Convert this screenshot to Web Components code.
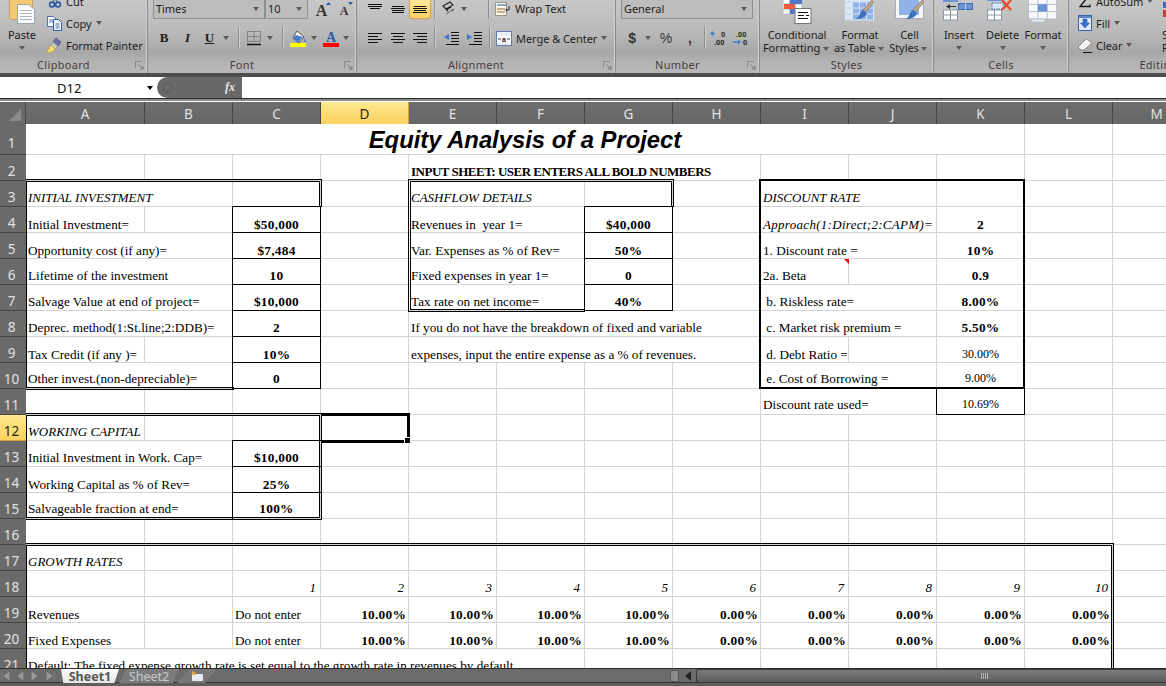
<!DOCTYPE html>
<html><head><meta charset="utf-8"><title>Equity Analysis</title>
<style>
html,body{margin:0;padding:0;overflow:hidden;background:#fff}
</style></head><body>
<x-app></x-app>
<script>
const grid3=(x,y,w,h,c,r,f='#fff',s='#9fb0c8')=>{let o=`<rect x="${x}" y="${y}" width="${w}" height="${h}" fill="${f}" stroke="${s}"/>`;for(let i=1;i<c;i++){const X=x+w*i/c;o+=`<path d="M${X} ${y}V${y+h}" stroke="${s}"/>`}for(let i=1;i<r;i++){const Y=y+h*i/r;o+=`<path d="M${x} ${Y}H${x+w}" stroke="${s}"/>`}return o};
const lines=(arr)=>arr.map(([x,y,w])=>`<path d="M${x} ${y+.5}h${w}" stroke="#111"/>`).join('');
const brush=(x,y)=>`<path d="M${x+15} ${y}l2 2-8 10-3-2z" fill="#b9a98a" stroke="#7a6a4f" stroke-width=".6"/><path d="M${x+5} ${y+10}l5 3c-1 4-6 6-11 6 3-2 4-6 6-9z" fill="#3f70c0"/>`;
const ICONS={
paste:[27,34,`<rect x=".5" y=".5" width="23" height="29" rx="2" fill="#f7c873" stroke="#c99c52"/><path d="M8.5 14.5h11l6 5v14h-17z" fill="#fbfcfe" stroke="#9aa7b8"/>`+[20,23,26,29].map(y=>`<path d="M11 ${y}.5h12" stroke="#a9b4c4"/>`).join('')],
cut:[16,14,`<circle cx="5" cy="10.5" r="2.4" fill="none" stroke="#2c5aa8" stroke-width="1.6"/><circle cx="11" cy="10.5" r="2.4" fill="none" stroke="#2c5aa8" stroke-width="1.6"/><path d="M6 8l3.5-8M10 8L6.5 0" stroke="#56647a" stroke-width="1.2"/>`],
copy:[16,16,`<path d="M.5 1.5h6l3 3v7h-9z" fill="#fff" stroke="#4a74b8"/><path d="M6.5 4.5h5l3 3v8h-8z" fill="#eef4fc" stroke="#2c5aa8"/><path d="M2 5h4M2 7h4M8.5 9h4M8.5 11h4M8.5 13h4" stroke="#4a74b8"/>`],
painter:[17,16,`<path d="M10 1l5 4-3 4-5-4z" fill="#6a70a8" stroke="#3c4070" stroke-width=".6"/><path d="M7 5l5 4-3 3-4-3z" fill="#c9c9c9" stroke="#777" stroke-width=".5"/><path d="M5 8l4 4c-2 3-6 4-9 3 3-1 3-5 5-7z" fill="#f6dc6a" stroke="#b59a30" stroke-width=".5"/>`],
borders:[16,16,`<path d="M1.5 1.5h13v10h-13zM8 1.5v10M1.5 6.5h13" fill="none" stroke="#555" stroke-dasharray="1 1"/><path d="M1 14.5h14" stroke="#111" stroke-width="1.5"/>`],
fill:[17,17,`<path d="M7 1l7 6-5 6-6-5z" fill="#fff" stroke="#333" stroke-width=".8"/><path d="M6 5l7 2-5 6-5-5z" fill="#4d7cc8"/><path d="M14.5 8c1 2 2 3 1 4s-2 0-1-4z" fill="#4d7cc8"/><rect y="13" width="16" height="4" fill="#ffff00"/>`],
color:[17,17,`<text x="8" y="12" text-anchor="middle" font-family="Liberation Serif" font-weight="700" font-size="14" fill="#2c5aa8">A</text><rect y="13" width="16" height="4" fill="#ff0000"/>`],
growA:[16,16,`<text x="6.5" y="15" text-anchor="middle" font-family="Liberation Serif" font-weight="700" font-size="16" fill="#333">A</text><path d="M11 4l2.5-3 2.5 3z" fill="#2c5aa8"/>`],
shrinkA:[16,16,`<text x="6" y="14" text-anchor="middle" font-family="Liberation Serif" font-weight="700" font-size="12" fill="#333">A</text><path d="M10 1l2.5 3 2.5-3z" fill="#2c5aa8"/>`],
vtop:[14,10,lines([[0,1,14],[0,3,14],[2,5,10]])],
vmid:[14,10,lines([[1,2,12],[0,4,14],[1,6,12],[1,8,12]])],
vbot:[14,10,lines([[1,3,12],[0,5,14],[1,7,12],[0,9,14]])],
left:[14,13,lines([[0,1,14],[0,4,10],[0,7,14],[0,10,10]])],
center:[14,13,lines([[0,1,14],[2,4,10],[0,7,14],[2,10,10]])],
right:[14,13,lines([[0,1,14],[4,4,10],[0,7,14],[4,10,10]])],
orient:[14,16,`<path d="M1 5l7-4 3 3-7 4zM4 9l5-3M2 6l4 4" fill="none" stroke="#222" stroke-width="1.1"/><path d="M4 13l8-5" stroke="#666"/><path d="M12 8l-3 .2 1.6 2.5z" fill="#666"/>`],
indL:[15,14,lines([[7,1,8],[7,4,8],[7,7,8],[7,10,8],[2,13,13]])+`<path d="M0 6l5-3v6z" fill="#3f78d0"/>`],
indR:[15,14,lines([[7,1,8],[7,4,8],[7,7,8],[7,10,8],[2,13,13]])+`<path d="M5 6L0 3v6z" fill="#3f78d0"/>`],
wrap:[17,16,`<rect x=".5" y="1.5" width="11" height="13" fill="#fbf6ea" stroke="#998"/><path d="M2 4h10" stroke="#2c5aa8"/><path d="M2 8h8M2 11h8" stroke="#a06030"/><path d="M14 5v4h-3" fill="none" stroke="#333"/><path d="M10 9l2-1.5v3z" fill="#333"/>`],
merge:[16,15,`<rect x=".5" y=".5" width="15" height="14" fill="#e9eef7" stroke="#5b7db0"/><rect x="1" y="5" width="14" height="6" fill="#fff"/><text x="8" y="10.500" text-anchor="middle" font-family="Liberation Sans" font-size="7" font-weight="700" fill="#222">a</text><path d="M2 8h3M11 8h3" stroke="#333"/>`],
inc:[18,16,`<path d="M1 3.500h4" stroke="#3f78d0" stroke-width="1.4"/><path d="M0 3.500l3-2.500v5z" fill="#3f78d0"/><text x="11" y="7" font-family="Liberation Sans" font-weight="700" font-size="7.500" fill="#222">0</text><text x="4" y="15" font-family="Liberation Sans" font-weight="700" font-size="7.500" fill="#222">.00</text>`],
dec:[18,16,`<text x="4" y="7" font-family="Liberation Sans" font-weight="700" font-size="7.500" fill="#222">.00</text><path d="M1 12h6" stroke="#3f78d0" stroke-width="1.4"/><path d="M9 12l-3-2.500v5z" fill="#3f78d0"/><text x="11" y="15" font-family="Liberation Sans" font-weight="700" font-size="7.500" fill="#222">0</text>`],
cond:[30,30,grid3(1,0,19,20,3,4,'#fff','#b7c0cc')+`<rect x="8" y="5" width="12" height="5" fill="#4d79c7"/><rect x="2" y="10" width="11" height="5" fill="#ef5b3d"/><rect x="8" y="15" width="6" height="5" fill="#4d79c7"/><rect x="13" y="14.500" width="16" height="15" fill="#fff" stroke="#777"/><path d="M16 18.500h10M16 21.500h6M24 21.500h3M16 24.500h10" stroke="#111"/>`],
table:[30,30,grid3(.5,2,28,24,4,4,'#dbe6f6','#a8bcdc')+`<rect x="7.500" y="8" width="21" height="18" fill="#8fb2e8"/>`+grid3(.5,2,28,24,4,4,'none','#dbe6f6')+brush(12,6)],
cstyle:[30,30,`<rect x=".5" y=".5" width="28" height="24" fill="#f4f7fc" stroke="#aab"/><rect x="4" y="4" width="20" height="17" fill="#8fb2e8"/>`+brush(12,6)],
insert:[32,30,grid3(.5,16,14,10,2,2,'#fff','#8a96a6')+`<rect x="15.500" y="9.500" width="14" height="6" fill="#6c94d4" stroke="#3e6cb4"/><path d="M22.500 9v7" stroke="#bcd"/><rect x="0" y="0" width="15" height="8" fill="#6c94d4"/><path d="M5 12.500h8" stroke="#333"/><path d="M3 12.500l4-2.500v5z" fill="#333"/>`],
del:[32,30,grid3(.5,16,14,10,2,2,'#fff','#8a96a6')+`<rect x="5" y="9" width="11" height="6" fill="#dbe6f6" stroke="#4a74b8" stroke-dasharray="1.500 1"/><rect x="0" y="0" width="16" height="7" fill="#6c94d4"/><path d="M15 6l9 10M24 6l-9 10" stroke="#e84a2a" stroke-width="2.200"/>`],
fmt:[30,30,grid3(.5,3,28,22,3,3,'#f6f8fc','#b7c0cc')+`<rect x="9.800" y="10.300" width="9.300" height="7.300" fill="#6c94d4"/><rect x="3" y="25" width="14" height="3" rx="1.500" fill="#e6eaf0" stroke="#b7c0cc"/>`],
sigma:[14,14,`<path d="M1.500 1.500h10v2M2 1.500l5 5-5 6h10v-2" fill="none" stroke="#111" stroke-width="1.300"/>`],
fillD:[14,16,`<rect x=".5" y=".5" width="13" height="15" fill="#dfe9f8" stroke="#3b66aa"/><rect x="1" y="1" width="12" height="2" fill="#5b86c8"/><path d="M5 4h4v4h2.500L7 13 2.500 8H5z" fill="#3a74d0" stroke="#234c94" stroke-width=".5"/>`],
eraser:[16,15,`<path d="M1 9l7-7a2 2 0 0 1 3 0l3 2a2 2 0 0 1 0 2l-7 6H4z" fill="#f4f4f4" stroke="#888"/><path d="M6 14.500h9" stroke="#111"/>`],
sort:[12,24,`<rect x="1" y="2" width="4" height="6" fill="#3a6cc0"/><rect x="1" y="10" width="4" height="7" fill="#c8402a"/>`],
launcher:[9,9,`<path d="M.5 7V.5H7" fill="none" stroke="#8a8a8a"/><path d="M3.500 3.500L8 8M8 5v3H5" fill="none" stroke="#777"/>`],
};
const svgFor=n=>{const [w,h,b]=ICONS[n];return `<svg xmlns="http://www.w3.org/2000/svg" width="${w}" height="${h}" viewBox="0 0 ${w} ${h}" style="display:block;flex:none;overflow:visible">${b}</svg>`};

class Base extends HTMLElement{
  constructor(){super();this.attachShadow({mode:'open'})}
}
class XIc extends Base{connectedCallback(){
  const n=this.getAttribute('n'),w=this.getAttribute('w')||'22',ml=this.getAttribute('ml')||0;
  this.shadowRoot.innerHTML=`<style>:host{display:flex;align-items:center;justify-content:center;flex:none;width:${w}px;margin-left:${ml}px;height:100%}</style>${n?svgFor(n):''}<slot></slot>`;
}}
class XCaret extends Base{connectedCallback(){
  const w=this.getAttribute('w')||'12';
  this.shadowRoot.innerHTML=`<style>:host{display:inline-flex;align-items:center;justify-content:center;flex:none;width:${w}px;height:100%;vertical-align:middle}i{display:block;width:0;height:0;border:3.5px solid transparent;border-top:4px solid #5a5a5a;border-bottom:0}</style><i></i>`;
}}
class XSep extends Base{connectedCallback(){
  const w=this.getAttribute('w')||'6';
  this.shadowRoot.innerHTML=`<style>:host{display:flex;justify-content:center;flex:none;width:${w}px;height:100%;align-items:center}i{display:block;width:1px;height:${this.getAttribute('h')||22}px;background:#8e8e8e;box-shadow:1px 0 0 #d0d0d0}</style><i></i>`;
}}
class XCombo extends Base{connectedCallback(){
  const w=this.getAttribute('w');
  this.shadowRoot.innerHTML=`<style>:host{display:flex;flex:none;width:${w}px;height:22px;box-sizing:border-box;border:1px solid #8f8f8f;border-top:0;background:#bdbdbd;align-items:center;padding-left:2px;color:#1e1e1e;font-size:11px;justify-content:space-between;padding-top:2px}</style><span><slot></slot></span><x-caret w="17"></x-caret>`;
}}
class XSmall extends Base{connectedCallback(){
  const n=this.getAttribute('n'),iw=this.getAttribute('iw')||'21',c=this.hasAttribute('caret');
  this.shadowRoot.innerHTML=`<style>:host{display:flex;height:22px;align-items:center;white-space:nowrap;flex:none}span{margin-left:1px}</style><x-ic n="${n}" w="${iw}"></x-ic><span><slot></slot></span>${c?'<x-caret w="14"></x-caret>':''}`;
}}
class XBig extends Base{connectedCallback(){
  const n=this.getAttribute('n'),w=this.getAttribute('w');
  this.shadowRoot.innerHTML=`<style>:host{display:flex;flex-direction:column;align-items:center;flex:none;width:${w}px;height:70px;white-space:nowrap;line-height:13px;text-align:center}
  .i{height:37px;display:flex;align-items:flex-end;margin-bottom:4px;flex:none}</style>
  <div class="i">${n?svgFor(n):''}</div><slot></slot>`;
}}
class XGroup extends Base{connectedCallback(){
  const w=this.getAttribute('w'),l=this.getAttribute('label'),lc=this.hasAttribute('launcher');
  this.shadowRoot.innerHTML=`<style>:host{display:flex;flex-direction:column;flex:none;box-sizing:border-box;width:${w}px;height:86px;border-right:1px solid #8a8a8a;box-shadow:inset -1px 0 0 #cfcfcf;position:relative}
  .b{height:70px;flex:none;display:flex;flex-direction:column}
  .l{height:16px;line-height:15px;text-align:center;color:#4a3c3c;font-size:11px;letter-spacing:.3px;position:relative;white-space:nowrap;padding-right:${lc?20:0}px}
  .k{position:absolute;right:3px;top:4px}</style>
  <div class="b"><slot></slot></div><div class="l">${l}${lc?`<span class="k">${svgFor('launcher')}</span>`:''}</div>`;
}}
class XRibbon extends Base{connectedCallback(){
  this.shadowRoot.innerHTML=`<style>
  :host{display:block;height:73px;overflow:hidden;flex:none;background:linear-gradient(#c8c8c8 0,#b9b9b9 45%,#a7a7a7 72%,#b3b3b3 85%,#b8b8b8 100%);font:11px "Noto Sans",sans-serif;color:#1c1c1c;letter-spacing:-.05px}
  .w{display:flex;margin-top:-13px;width:1400px}
  .r{display:flex;align-items:stretch}
  .col{display:flex;flex-direction:column}
  .sel{display:flex;align-items:center;justify-content:center;flex:none;width:22px;height:21px;box-sizing:border-box;margin:11px 0 0 0;background:linear-gradient(#ffe9a3,#fdd25f);border:1px solid #d2a24a;border-top:0;border-radius:0 0 3px 3px}
  .t{display:flex;align-items:center;white-space:nowrap}
  b.f{font:700 13px "Liberation Serif",serif}
  i.f{font:700 italic 13px "Liberation Serif",serif}
  u.f{font:700 13px "Liberation Serif",serif}
  .nf{font:700 14px "Liberation Sans",sans-serif;color:#333}
  </style>
  <div class="w">
   <x-group w="148" label="Clipboard" launcher>
    <div class="r" style="height:70px">
      <x-big w="44" n="paste">Paste<x-caret style="height:13px"></x-caret></x-big>
      <div class="col" style="padding-top:3px">
        <x-small n="cut">Cut</x-small>
        <x-small n="copy" caret>Copy</x-small>
        <x-small n="painter">Format Painter</x-small>
      </div>
    </div>
   </x-group>
   <x-group w="209" label="Font" launcher>
    <div class="r" style="height:32px;padding:0 0 0 5px;align-items:flex-end">
      <x-combo w="112" style="font-size:11px">Times</x-combo><x-combo w="43">10</x-combo>
      <x-ic n="growA" w="25" ml="2" style="height:20px"></x-ic><x-ic n="shrinkA" w="22" style="height:20px"></x-ic>
    </div>
    <div class="r" style="height:38px;padding-left:4px">
      <x-ic w="24"><b class="f">B</b></x-ic><x-ic w="23"><i class="f">I</i></x-ic><x-ic w="21"><u class="f">U</u></x-ic><x-caret></x-caret><x-sep w="12"></x-sep>
      <x-ic n="borders" w="20"></x-ic><x-caret></x-caret><x-sep w="12"></x-sep>
      <x-ic n="fill" w="20"></x-ic><x-caret></x-caret><x-ic n="color" w="22"></x-ic><x-caret w="8"></x-caret>
    </div>
   </x-group>
   <x-group w="259" label="Alignment" launcher>
    <div class="r" style="height:32px;padding-left:6px">
      <x-ic n="vtop" w="23" style="padding-top:9px;box-sizing:border-box"></x-ic><x-ic n="vmid" w="23" style="padding-top:11px;box-sizing:border-box"></x-ic>
      <div class="sel">${svgFor('vbot')}</div>
      <x-sep w="7" h="20" style="padding-top:11px;box-sizing:border-box"></x-sep>
      <x-ic n="orient" w="22" style="padding-top:11px;box-sizing:border-box"></x-ic><x-caret w="8" style="padding-top:11px;box-sizing:border-box"></x-caret>
      <x-sep w="6" h="20" style="margin-left:17px;padding-top:11px;box-sizing:border-box"></x-sep>
      <div class="t" style="padding-top:11px"><x-ic n="wrap" w="24" style="height:auto"></x-ic>Wrap Text</div>
    </div>
    <div class="r" style="height:38px;padding-left:6px">
      <x-ic n="left" w="23"></x-ic><x-ic n="center" w="23"></x-ic><x-ic n="right" w="22"></x-ic>
      <x-sep w="7"></x-sep>
      <x-ic n="indL" w="23" ml="2"></x-ic><x-ic n="indR" w="23"></x-ic>
      <x-sep w="6"></x-sep>
      <div class="t"><x-ic n="merge" w="24" style="height:auto"></x-ic>Merge &amp; Center<x-caret w="14" style="height:auto"></x-caret></div>
    </div>
   </x-group>
   <x-group w="144" label="Number" launcher>
    <div class="r" style="height:32px;padding-left:5px;align-items:flex-end"><x-combo w="132">General</x-combo></div>
    <div class="r" style="height:38px;padding-left:6px">
      <x-ic w="20"><span class="nf">$</span></x-ic><x-caret></x-caret><x-ic w="22" ml="1"><span class="nf" style="font-weight:400">%</span></x-ic><x-ic w="22" ml="2"><span class="nf">,</span></x-ic><x-sep w="6"></x-sep>
      <x-ic n="inc" w="22" ml="1"></x-ic><x-ic n="dec" w="22"></x-ic>
    </div>
   </x-group>
   <x-group w="174" label="Styles">
    <div class="r">
      <x-big w="74" n="cond">Conditional<span>Formatting<x-caret w="11" style="height:13px"></x-caret></span></x-big>
      <x-big w="52" n="table">Format<span>as Table<x-caret w="11" style="height:13px"></x-caret></span></x-big>
      <x-big w="47" n="cstyle">Cell<span>Styles<x-caret w="11" style="height:13px"></x-caret></span></x-big>
    </div>
   </x-group>
   <x-group w="135" label="Cells">
    <div class="r">
      <x-big w="50" n="insert">Insert<x-caret style="height:13px"></x-caret></x-big>
      <x-big w="37" n="del">Delete<x-caret style="height:13px"></x-caret></x-big>
      <x-big w="44" n="fmt">Format<x-caret style="height:13px"></x-caret></x-big>
    </div>
   </x-group>
   <x-group w="180" label="Editing">
    <div class="r" style="height:70px;padding-left:6px">
      <div class="col" style="padding-top:3px;width:87px;flex:none">
        <x-small n="sigma" caret iw="20">AutoSum</x-small>
        <x-small n="fillD" caret iw="20">Fill</x-small>
        <x-small n="eraser" caret iw="20">Clear</x-small>
      </div>
      <x-big w="36" n="sort" style="align-items:flex-start">Sort &amp;<span>Filter</span></x-big>
    </div>
   </x-group>
  </div>`;
}}
class XFormula extends Base{connectedCallback(){
  this.shadowRoot.innerHTML=`<style>
  :host{display:flex;flex:none;height:29px;box-sizing:border-box;background:#fff;border-top:4px solid;border-color:#4d4d4d;flex-direction:column}
  .m{display:flex;height:21px;flex:none;font:13px "Noto Sans",sans-serif;color:#111;align-items:stretch}
  .n{width:157px;display:flex;align-items:center;flex:none;position:relative;padding-left:57px;box-sizing:border-box}
  .a{position:absolute;right:4px;top:9px;width:0;height:0;border:3.5px solid transparent;border-top:4px solid #000;border-bottom:0}
  .p{width:85px;flex:none;background:#686868;border-radius:11px 0 0 11px;display:flex;align-items:center;justify-content:space-between;padding:0 7px 0 6px;box-sizing:border-box}
  .d{width:9px;height:9px;border-radius:50%;background:radial-gradient(#6e6e6e,#5c5c5c);box-shadow:0 0 0 1px #606060}
  .f{font:italic 700 12px "Liberation Serif",serif;color:#e4e4e4}
  .bar{height:3px;flex:none;background:linear-gradient(#2a2a2a 0,#2a2a2a 33%,#8b8b8b 34%,#8b8b8b 100%)}
  .s{flex:1}
  </style><div class="m"><div class="n">D12<span class="a"></span></div><div class="p"><span class="d"></span><span class="f">fx</span></div><div class="s"></div></div><div class="bar"></div><slot></slot>`;
}}
const COLS='ABCDEFGHIJKLM'.split('');
class XSheet extends Base{connectedCallback(){
  const c={};
  const set=(k,t,o={})=>c[k]=Object.assign({t},o);
  set('A1','Equity Analysis of a Project',{span:11,cls:'title'});
  set('E2','INPUT SHEET: USER ENTERS ALL BOLD NUMBERS',{span:4,cls:'b hd2'});
  const A=[[3,'INITIAL INVESTMENT',2,'i'],[4,'Initial Investment=',1],[5,'Opportunity cost (if any)=',2],[6,'Lifetime of the investment',2],[7,'Salvage Value at end of project=',2],[8,'Deprec. method(1:St.line;2:DDB)=',2],[9,'Tax Credit (if any )=',1],[10,'Other invest.(non-depreciable)=',2],[12,'WORKING CAPITAL',1,'i'],[13,'Initial Investment in Work. Cap=',2],[14,'Working Capital as % of Rev=',2],[15,'Salvageable fraction at end=',2],[17,'GROWTH RATES',1,'i'],[19,'Revenues',1],[20,'Fixed Expenses',1],[21,'Default: The fixed expense growth rate is set equal to the growth rate in revenues by default.',6]];
  A.forEach(([r,t,s,k])=>set('A'+r,t,{span:s,cls:k||''}));
  [[4,'$50,000'],[5,'$7,484'],[6,'10'],[7,'$10,000'],[8,'2'],[9,'10%'],[10,'0'],[13,'$10,000'],[14,'25%'],[15,'100%']].forEach(([r,t])=>set('C'+r,t,{cls:'b m'}));
  [[3,'CASHFLOW DETAILS','i'],[4,'Revenues in  year 1='],[5,'Var. Expenses as % of Rev='],[6,'Fixed expenses in year 1='],[7,'Tax rate on net income=']].forEach(([r,t,k])=>set('E'+r,t,{span:2,cls:k||''}));
  [[4,'$40,000'],[5,'50%'],[6,'0'],[7,'40%']].forEach(([r,t])=>set('G'+r,t,{cls:'b m'}));
  set('E8','If you do not have the breakdown of fixed and variable',{span:4});
  set('E9','expenses, input the entire expense as a % of revenues.',{span:4});
  [[3,'DISCOUNT RATE',2,'i'],[4,'Approach(1:Direct;2:CAPM)=',2,'i ap'],[5,'1. Discount rate =',2],[6,'2a. Beta',1],[7,' b. Riskless rate=',2],[8,' c. Market risk premium =',2],[9,' d. Debt Ratio =',1],[10,' e. Cost of Borrowing =',2],[11,'Discount rate used=',2]].forEach(([r,t,s,k])=>set('I'+r,t,{span:s,cls:k||''}));
  [[4,'2'],[5,'10%'],[6,'0.9'],[7,'8.00%'],[8,'5.50%']].forEach(([r,t])=>set('K'+r,t,{cls:'b m'}));
  [[9,'30.00%'],[10,'9.00%'],[11,'10.69%']].forEach(([r,t])=>set('K'+r,t,{cls:'m sm'}));
  'CDEFGHIJKL'.split('').forEach((k,i)=>set(k+'18',String(i+1),{cls:'rt i n'}));
  [19,20].forEach(r=>{set('C'+r,'Do not enter');'DEFG'.split('').forEach(k=>set(k+r,'10.00%',{cls:'b rt'}));'HIJKL'.split('').forEach(k=>set(k+r,'0.00%',{cls:'b rt'}))});
  const low=[4,5,9,14,19,20],high=[10,11,15];

  let h='';
  h+=`<div class="hd corner"><i></i></div>`;
  COLS.forEach((k,i)=>h+=`<div class="hd col${k==='D'?' on':''}" style="grid-area:1/${i+2}">${k}</div>`);
  for(let r=1;r<=22;r++){
    h+=`<div class="hd row${r===12?' on':''}" style="grid-area:${r+1}/1">${r}</div>`;
    let skip=0;
    const adj=low.includes(r)?' lo':high.includes(r)?' hi':'';
    COLS.forEach((k,i)=>{
      if(skip>0){skip--;return}
      const d=c[k+r];
      const span=d&&d.span||1;skip=span-1;
      const esc=(d?d.t:'').replace(/&/g,'&amp;');
      h+=`<div class="c${adj} ${d&&d.cls||''}" style="grid-area:${r+1}/${i+2}/auto/span ${span}">${esc}</div>`;
    });
  }
  const ci=k=>COLS.indexOf(k)+2;
  const fr=(c1,r1,c2,r2,st)=>{h+=`<div class="f" style="grid-area:${r1+1}/${ci(c1)}/${r2+2}/${ci(c2)+1};${st}"></div>`};
  const D='3px double #000',T='1px solid #000';
  fr('A',3,'C',3,`border-top:${D};border-right:${D};border-left:${D};margin:-2px -1px 0 -2px`);
  fr('A',4,'B',10,`border-left:${D};border-bottom:${D};margin:0 -1px -1px -2px`);
  ['4','5','6','7','8','9','10'].forEach(r=>fr('C',+r,'C',+r,`border:${T};margin:-1px 0 0 -1px`));
  fr('A',12,'C',15,`border:${D};margin:-2px -1px -1px -2px`);
  [13,14,15].forEach(r=>fr('C',r,'C',r,`border-top:${T};border-left:${T};margin:-1px 0 0 -1px`));
  fr('E',3,'G',3,`border-top:${D};border-right:${D};border-left:${D};margin:-2px -1px 0 -1px`);
  fr('E',4,'F',7,`border-left:${D};border-bottom:${D};margin:0 0 -1px -1px`);
  [4,5,6,7].forEach(r=>fr('G',r,'G',r,`border:${T};margin:-1px 0 0 -1px`));
  fr('I',3,'K',10,`border:2px solid #000;margin:-2px 0 0 -2px`);
  fr('K',11,'K',11,`border:${T};border-top:0;margin:0 0 0 -1px`);
  fr('A',17,'L',22,`border:${D};margin:-2px -1px 0 -2px`);
  h+=`<div class="f sel" style="grid-area:13/${ci('D')}"><i class="hdl"></i></div>`;
  h+=`<div class="f" style="grid-area:7/${ci('I')};border:0"><i class="cm"></i></div>`;
  this.shadowRoot.innerHTML=`<style>
  :host{display:block;flex:1;min-height:0;overflow:hidden;background:#fff;font:13.2px/15px "Liberation Serif",serif;color:#000}
  .g{display:grid;grid-template-columns:26px 119px repeat(12,88px);grid-template-rows:22px 31px repeat(22,26px);width:1200px}
  .c{box-sizing:border-box;border-right:1px solid #d4d4d4;border-bottom:1px solid #d4d4d4;display:flex;align-items:flex-end;padding:0 2px 1px;white-space:pre;min-width:0;min-height:0;overflow:visible}
  .c.lo{padding-bottom:0}.c.hi{padding-bottom:2px}
  .c.i{font-style:italic;font-size:13px}.c.b{font-weight:700;font-size:13.33px;letter-spacing:.25px}
  .c.ap{letter-spacing:.3px}
  .c.hd2{font-size:13px;letter-spacing:-.5px}
  .c.m{justify-content:center}.c.rt{justify-content:flex-end;padding-right:2px}
  .c.n{padding-right:4px}
  .c.sm{font-size:12px}
  .c.title{justify-content:center;align-items:center;font:italic 700 23.8px/28px "Liberation Sans",sans-serif;padding:2px 0 0}
  .hd{box-sizing:border-box;background:#6a6a6a;color:#e2e2e2;font:13.5px "Noto Sans",sans-serif;display:flex;align-items:center;justify-content:center;z-index:3}
  .hd.col{border-right:1px solid #454545;background:linear-gradient(#6e6e6e,#666);padding-top:1px}
  .hd.row{border-bottom:1px solid #454545;padding:7px 3px 0 0;width:26px}
  .hd.on{background:linear-gradient(#ffe88f,#fdd25f);color:#1c2a12;border-color:#d69f3a}
  .corner{grid-area:1/1;position:relative;border-right:1px solid #454545}
  .corner i{position:absolute;right:4px;bottom:3px;width:0;height:0;border-style:solid;border-width:0 0 12px 12px;border-color:transparent transparent #8a8a8a transparent}
  .f{box-sizing:border-box;pointer-events:none;z-index:2;min-width:0;min-height:0;position:relative}
  .sel{border:3px solid #000;border-left:0;margin:-2px -1px -2px 1px}
  .hdl{position:absolute;right:-4px;bottom:-4px;width:5px;height:5px;background:#000;border:1px solid #fff}
  .cm{position:absolute;right:0;top:0;width:0;height:0;border-style:solid;border-width:0 5px 5px 0;border-color:transparent #f00 transparent transparent}
  </style><div class="g">${h}</div>`;
}}
class XTabs extends Base{connectedCallback(){
  const nav=['M2 3v8M9 3l-5 4 5 4z','M8 3l-5 4 5 4z','M2 3l5 4-5 4z','M2 3l5 4-5 4zM9 3v8'];
  this.shadowRoot.innerHTML=`<style>
  :host{display:flex;flex:none;height:18px;box-sizing:border-box;background:#6b6b6b;border-top:1px solid #2c2c2c;padding-bottom:3px;box-shadow:inset 0 -3px 0 #5e5e5e,inset 0 -4px 0 #333;font:700 12.5px "Noto Sans",sans-serif;align-items:stretch}
  .nav{display:flex;width:61px;flex:none;box-sizing:border-box;align-items:center;gap:1px}
  .nav svg{flex:none;display:block}
  .t1{width:58px;flex:none;background:linear-gradient(#fff,#e4e4e4);color:#555;display:flex;align-items:center;justify-content:center;clip-path:polygon(0 0,100% 0,92% 100%,4% 100%)}
  .t2{width:60px;flex:none;background:#7b7b7b;color:#c9c9c9;font-weight:400;display:flex;align-items:center;justify-content:center;clip-path:polygon(12% 0,100% 0,90% 100%,0 100%)}
  .t3{width:40px;margin-left:-2px;flex:none;background:#777;clip-path:polygon(30% 0,100% 0,70% 100%,0 100%);display:flex;align-items:center;justify-content:center}
  .sp{width:453px;flex:none}
  .split{width:9px;flex:none;background:#8c8c8c;border:1px solid #555;box-sizing:border-box;margin:1px 0}
  .la{width:17px;flex:none;display:flex;align-items:center;justify-content:center}
  .th{flex:1;border-radius:3px 0 0 3px;background:linear-gradient(#7c7c7c,#5c5c5c);border:1px solid #3a3a3a;border-right:0;display:flex;align-items:center;justify-content:center;box-sizing:border-box;padding-left:106px}
  .gr{width:7px;height:6px;background:repeating-linear-gradient(90deg,#b0b0b0 0,#b0b0b0 1px,transparent 1px,transparent 2px)}
  </style>
  <div class="nav">${nav.map(d=>`<svg width="14" height="14" viewBox="0 0 14 14"><path d="${d}" fill="#9a9a9a" stroke="#9a9a9a" stroke-width=".6"/></svg>`).join('')}</div>
  <div class="t1">Sheet1</div><div class="t2">Sheet2</div>
  <div class="t3"><svg width="14" height="11" viewBox="0 0 14 11"><rect x="2" y="3" width="11" height="7" rx="1" fill="#e6ecf4"/><path d="M3 0l1 1.500 1.500-.5-.5 1.500 1.500 1-2 .3L4 5 3 3.500 1 3.300l1.500-1L2 .8z" fill="#f2a93a"/></svg></div>
  <div class="sp"></div><div class="split"></div>
  <div class="la"><svg width="8" height="10" viewBox="0 0 8 10"><path d="M7 0L1 5l6 5z" fill="#222"/></svg></div>
  <div class="th"><div class="gr"></div></div>`;
}}
class XApp extends Base{connectedCallback(){
  this.shadowRoot.innerHTML=`<style>:host{display:flex;flex-direction:column;width:1166px;height:686px;overflow:hidden}</style>
  <x-ribbon></x-ribbon><x-formula></x-formula><x-sheet></x-sheet><x-tabs></x-tabs>`;
}}
[['x-ic',XIc],['x-caret',XCaret],['x-sep',XSep],['x-combo',XCombo],['x-small',XSmall],['x-big',XBig],['x-group',XGroup],['x-ribbon',XRibbon],['x-formula',XFormula],['x-sheet',XSheet],['x-tabs',XTabs],['x-app',XApp]].forEach(([n,c])=>customElements.define(n,c));
</script>
</body></html>
